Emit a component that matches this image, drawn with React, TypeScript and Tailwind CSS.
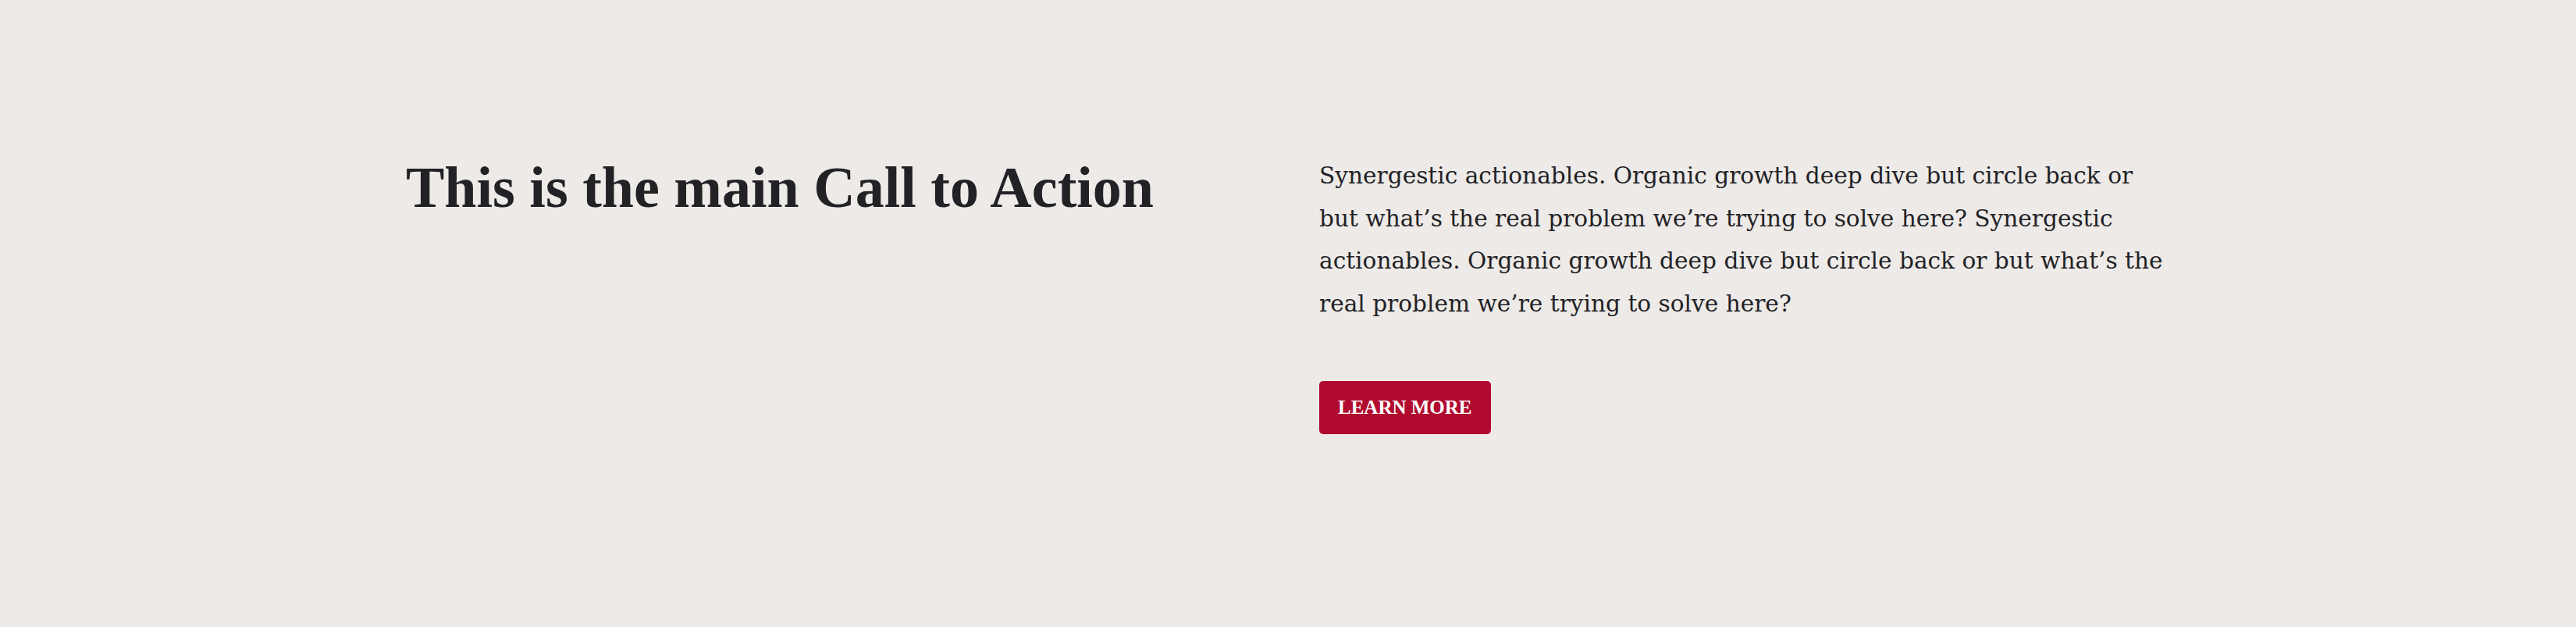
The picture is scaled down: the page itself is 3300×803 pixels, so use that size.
const App = () => {
  return (
    <section className="bg-[#edeae7] min-h-[803px] w-full pt-[196px]">
      <div className="mx-auto w-[2260px] flex">
        <div className="w-[1170px] shrink-0">
          <h2 className="font-['Liberation_Serif',serif] font-bold text-[74px] leading-[1.2] text-[#222226]">
            This is the main Call to Action
          </h2>
        </div>
        <div className="w-[1100px] pt-[2px]">
          <p className="font-['DejaVu_Serif',serif] text-[29.6px] leading-[54.5px] text-[#222226]">
            Synergestic actionables. Organic growth deep dive but circle back or but what’s the real
            problem we’re trying to solve here? Synergestic actionables. Organic growth deep dive but
            circle back or but what’s the real problem we’re trying to solve here?
          </p>
          <button className="mt-[72px] h-[68px] px-[24px] rounded-[5px] bg-[#b00b2f] text-white font-['Liberation_Serif',serif] font-bold text-[25px] uppercase">
            Learn More
          </button>
        </div>
      </div>
    </section>
  );
};

export default App;
